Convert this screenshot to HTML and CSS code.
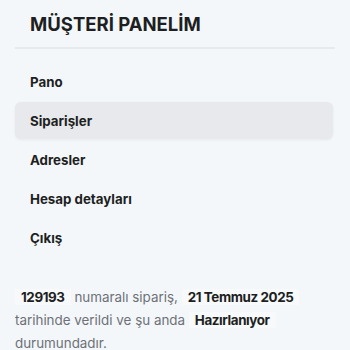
FILE: index.html
```html
<!DOCTYPE html>
<html lang="tr">
<head>
<meta charset="utf-8">
<link rel="stylesheet" href="styles.css">
</head>
<body>
<div class="page">
  <h2 class="title">MÜŞTERİ PANELİM</h2>
  <nav class="menu">
    <a class="item">Pano</a>
    <a class="item active">Siparişler</a>
    <a class="item">Adresler</a>
    <a class="item">Hesap detayları</a>
    <a class="item">Çıkış</a>
  </nav>
  <p class="info"><mark>129193</mark> numaralı sipariş, <mark>21 Temmuz 2025</mark> tarihinde verildi ve şu anda <mark>Hazırlanıyor</mark> durumundadır.</p>
</div>
</body>
</html>
```
FILE: styles.css
```css
html, body {
  margin: 0;
  background: #f4f7fa;
}
body {
  font-family: "Inter", "Noto Sans", sans-serif;
  color: #1d1f22;
}
.page {
  padding: 8px 15px 0 15px;
}
.title {
  margin: 0;
  padding: 0 15px 7px;
  font-size: 18.5px;
  font-weight: 700;
  line-height: 32px;
  border-bottom: 2px solid #e6e9ed;
}
.menu {
  display: flex;
  flex-direction: column;
  gap: 2px;
  padding: 14px 2px 0 0;
}
.item {
  display: flex;
  align-items: center;
  height: 37px;
  padding: 0 15px;
  font-size: 13.3px;
  font-weight: 700;
  border-radius: 6px;
}
.active {
  background: #e7e9ec;
  box-shadow: 0 1px 3px rgba(0,0,0,0.06);
}
.info {
  margin: 30px 0 0;
  font-size: 13.4px;
  line-height: 23px;
  color: #6d7177;
}
mark {
  background: #f7f9fb;
  color: #1d1f22;
  font-weight: 700;
  letter-spacing: -0.4px;
  padding: 0 6px;
}
```
